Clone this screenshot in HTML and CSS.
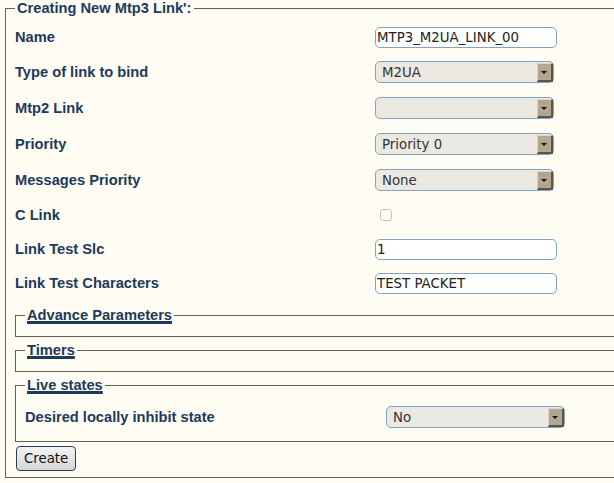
FILE: index.html
```html
<!DOCTYPE html>
<html lang="en">
<head>
    <meta charset="UTF-8">
    <title>Creating New Mtp3 Link</title>
    <link rel="stylesheet" href="styles.css">
</head>
<body>

<form class="link-form">
    <fieldset class="main-box">
        <legend>Creating New Mtp3 Link':</legend>

        <div class="form-row">
            <label for="link-name">Name</label>
            <input type="text" id="link-name" class="input-field" value="MTP3_M2UA_LINK_00">
        </div>
        <div class="form-row tall">
            <label for="link-type">Type of link to bind</label>
            <div class="select-box"><select id="link-type"><option>M2UA</option></select></div>
        </div>
        <div class="form-row tall">
            <label for="mtp2-link">Mtp2 Link</label>
            <div class="select-box"><select id="mtp2-link"><option></option></select></div>
        </div>
        <div class="form-row tall">
            <label for="priority">Priority</label>
            <div class="select-box"><select id="priority"><option>Priority 0</option></select></div>
        </div>
        <div class="form-row tall">
            <label for="msg-priority">Messages Priority</label>
            <div class="select-box"><select id="msg-priority"><option>None</option></select></div>
        </div>
        <div class="form-row">
            <label for="c-link">C Link</label>
            <input type="checkbox" id="c-link" class="check">
        </div>
        <div class="form-row">
            <label for="test-slc">Link Test Slc</label>
            <input type="text" id="test-slc" class="input-field" value="1">
        </div>
        <div class="form-row">
            <label for="test-chars">Link Test Characters</label>
            <input type="text" id="test-chars" class="input-field" value="TEST PACKET">
        </div>

        <!-- secciones plegables -->
        <fieldset class="sub-box collapsed first">
            <legend><a class="toggle">Advance Parameters</a></legend>
        </fieldset>
        <fieldset class="sub-box collapsed">
            <legend><a class="toggle">Timers</a></legend>
        </fieldset>
        <fieldset class="sub-box live">
            <legend><a class="toggle">Live states</a></legend>
            <div class="form-row tall wide">
                <label for="inhibit">Desired locally inhibit state</label>
                <div class="select-box"><select id="inhibit"><option>No</option></select></div>
            </div>
        </fieldset>

        <button type="button" class="btn-create">Create</button>
    </fieldset>
</form>

</body>
</html>
```

FILE: styles.css
```css
/* --- General --- */
html, body {
    margin: 0;
    height: 100%;
}

body {
    background-color: #fffcf3;
    font-family: "Liberation Sans", Arial, sans-serif;
    overflow: hidden;
}

/* --- Marco principal --- */
.main-box {
    margin: 0 0 0 5px;
    width: 720px;
    padding: 3px 9px 6px 9px;
    border: 1px solid #675f55;
    min-width: 0;
}

legend {
    padding: 0 2px;
    font-size: 11pt;
    font-weight: bold;
    line-height: 17px;
    color: #1c3a5c;
}

/* --- Filas del formulario --- */
.form-row {
    display: grid;
    grid-template-columns: 359px auto;
    align-items: center;
    height: 34px;
}

.form-row.tall {
    height: 36px;
}

.form-row.wide {
    grid-template-columns: 360px auto;
}

label {
    font-size: 11pt;
    font-weight: bold;
    line-height: 17px;
    color: #1c3a5c;
}

.input-field {
    width: 182px;
    height: 21px;
    margin: 1px 0 0 1px;
    padding: 0 1px;
    box-sizing: border-box;
    border: 1px solid #86a0bf;
    border-radius: 5px;
    background-color: #ffffff;
    font-family: "DejaVu Sans", sans-serif;
    font-size: 13.33px;
    color: #222222;
    outline: none;
}

.check {
    appearance: none;
    width: 12px;
    height: 12px;
    margin: 0 0 0 6px;
    border: 1px solid #c9c1b4;
    border-radius: 3px;
    background-color: #fffefb;
}

/* --- Desplegables --- */
.select-box {
    position: relative;
    width: 179px;
    height: 22px;
    margin-left: 1px;
}

.select-box select {
    appearance: none;
    width: 100%;
    height: 22px;
    margin: 0;
    padding: 0 0 0 6px;
    box-sizing: border-box;
    border: 1px solid #86a0bf;
    border-radius: 5px;
    background-color: #ece9e2;
    font-family: "DejaVu Sans", sans-serif;
    font-size: 13.33px;
    color: #333333;
    outline: none;
}

/* boton de la flecha */
.select-box::before {
    content: '';
    position: absolute;
    top: 2px;
    right: 1px;
    width: 13px;
    height: 16px;
    background-color: #b3a691;
    border-top: 1px solid #dcd5c9;
    border-left: 1px solid #dcd5c9;
    border-right: 2px solid #5b544b;
    border-bottom: 2px solid #5b544b;
    pointer-events: none;
}

.select-box::after {
    content: '';
    position: absolute;
    top: 10px;
    right: 7px;
    border-left: 3px solid transparent;
    border-right: 3px solid transparent;
    border-top: 3px solid #111111;
    pointer-events: none;
}

/* --- Secciones internas --- */
.sub-box {
    margin: 5px 0 0 0;
    padding: 0 9px 12px 9px;
    border: 1px solid #675f55;
    min-width: 0;
}

.sub-box.first {
    margin-top: 7px;
}

.sub-box.live {
    padding-top: 5px;
    padding-bottom: 6px;
}

.toggle {
    color: #1c3a5c;
    text-decoration: underline;
    text-decoration-thickness: 3px;
    text-underline-offset: 1px;
    cursor: pointer;
}

/* --- Boton --- */
.btn-create {
    display: block;
    margin: 4px 0 0 1px;
    height: 25px;
    padding: 0 7px;
    border: 1px solid #2a3e55;
    border-radius: 4px;
    background: linear-gradient(#f3f3f3, #d6d6d6);
    font-family: "DejaVu Sans", sans-serif;
    font-size: 13.33px;
    color: #111111;
}
```
